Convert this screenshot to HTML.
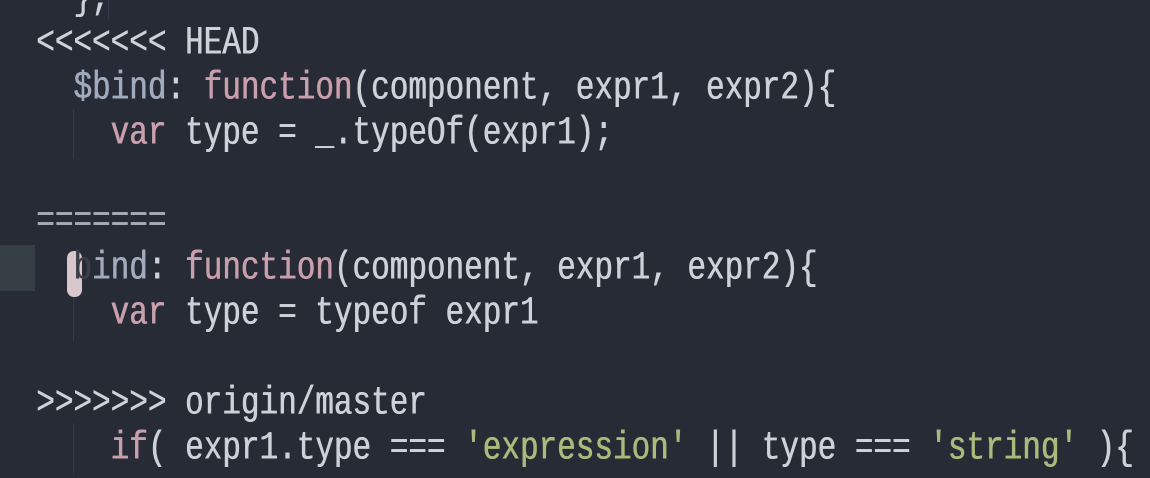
<!DOCTYPE html>
<html><head><style>
body{margin:0;width:1150px;height:472px;overflow:hidden;background:#272b35;position:relative;font-family:"Liberation Mono",monospace;}
.l{position:absolute;left:36px;height:45px;line-height:45px;font-size:31px;color:#cdd1d8;white-space:pre;transform:scaleY(1.3);transform-origin:0 50%;letter-spacing:0;text-shadow:0.6px 0 0 currentColor}
.k{color:#c99fae}.s{color:#acb97c}.d{color:#a0abbd}
.g{position:absolute;width:1px;background:#343945}
</style></head><body>
<div style="position:absolute;left:0;top:245px;width:35px;height:46px;background:#363e45"></div>
<div class="g" style="left:73px;top:109px;height:50px"></div>
<div class="g" style="left:73px;top:291px;height:50px"></div>
<div class="g" style="left:73px;top:423px;height:52px"></div>
<div class="g" style="left:108px;top:0;height:20px"></div>
<div class="l" style="top:-24px">  },</div>
<div class="l" style="top:21px">&lt;&lt;&lt;&lt;&lt;&lt;&lt; HEAD</div>
<div class="l" style="top:66px">  <span class="d">$bind</span>: <span class="k">function</span>(component, expr1, expr2){</div>
<div class="l" style="top:111px">    <span class="k">var</span> type = _.typeOf(expr1);</div>
<div class="l" style="top:199px;color:#a4a9b3">=======</div>
<div style="position:absolute;left:67px;top:251px;width:15px;height:46px;border-radius:7px;background:#d9c6cc"></div>
<div class="l" style="top:246px">  <span style="color:#3a3f4a">b</span><span class="d">ind</span>: <span class="k">function</span>(component, expr1, expr2){</div>
<div class="l" style="top:291px">    <span class="k">var</span> type = typeof expr1</div>
<div class="l" style="top:381px">&gt;&gt;&gt;&gt;&gt;&gt;&gt; origin/master</div>
<div class="l" style="top:426px">    <span class="k">if</span>( expr1.type === <span class="s">'expression'</span> || type === <span class="s">'string'</span> ){</div>
</body></html>
